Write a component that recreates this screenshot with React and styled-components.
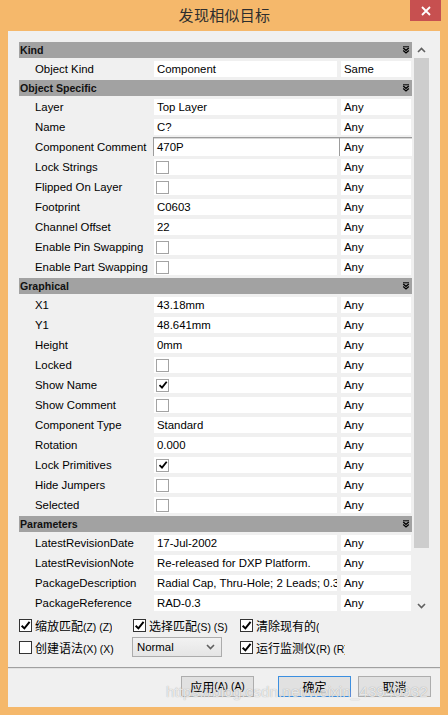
import React from "react";
import styled, { createGlobalStyle, css } from "styled-components";

const Global = createGlobalStyle`
  html, body { margin: 0; padding: 0; }
  body { width: 448px; height: 715px; overflow: hidden; background: #f5b86b; }
  * { box-sizing: border-box; }
`;

const UI = `"Liberation Sans", Arial, sans-serif`;
const CJK = `"Liberation Sans", "Noto Sans CJK SC", sans-serif`;

const Window = styled.div`
  position: relative;
  width: 448px;
  height: 715px;
  background: #f5b86b;
  display: flex;
  flex-direction: column;
  padding: 0 8px 8px 8px;
`;

const TitleBar = styled.div`
  height: 31px;
  display: grid;
  grid-template-columns: 1fr auto 1fr;
  align-items: start;
  margin: 0 -1px 0 0;
`;

const Title = styled.div`
  grid-column: 2;
  font-family: "Noto Sans CJK SC", sans-serif;
  font-size: 15px;
  line-height: 30px;
  color: #2e2e2e;
  letter-spacing: 0.3px;
`;

const CloseButton = styled.div`
  grid-column: 3;
  justify-self: end;
  width: 31px;
  height: 21px;
  background: #c75050;
  display: flex;
  align-items: center;
  justify-content: center;
`;

const Client = styled.div`
  flex: 1;
  background: #f0f0f0;
  display: flex;
  flex-direction: column;
`;

const TopPane = styled.div`
  padding: 11px 10px 0 11px;
  display: flex;
  flex-direction: column;
`;

const GridArea = styled.div`
  display: flex;
  gap: 1px;
  height: 572px;
`;

const Grid = styled.div`
  width: 393px;
  display: flex;
  flex-direction: column;
  gap: 1px;
  overflow: hidden;
`;

const Section = styled.div`
  display: flex;
  flex-direction: column;
`;

const SectionHeader = styled.div`
  height: 16px;
  margin-bottom: 1px;
  background: #a2a2a2;
  display: flex;
  align-items: center;
  justify-content: space-between;
  padding: 0 2px 0 1px;
  font-family: ${UI};
  font-weight: bold;
  font-size: 10.6px;
  color: #111;
`;

const Row = styled.div`
  height: 20px;
  display: grid;
  grid-template-columns: 131px 183px 70px;
  column-gap: 4px;
  align-items: center;
  font-family: ${UI};
  font-size: 11.4px;
  color: #000;
`;

const Label = styled.div`
  padding-left: 16px;
  white-space: nowrap;
  overflow: visible;
`;

const focusCss = css`
  align-self: start;
  height: 19px;
  border-top: 1px solid #9c9c9c;
  box-shadow: inset 0 1px 0 #d8d8d8;
`;

const Cell = styled.div`
  height: 16px;
  background: #fff;
  display: flex;
  align-items: center;
  padding-left: 3px;
  white-space: nowrap;
  overflow: hidden;
  ${(p) => p.$focused && focusCss}
`;

const ValueCell = styled(Cell)`
  ${(p) =>
    p.$focused &&
    css`
      margin-left: -1px;
      margin-right: -2px;
      padding-left: 3px;
      border-left: 1px solid #9c9c9c;
    `}
`;

const AnyCell = styled(Cell)`
  ${(p) =>
    p.$focused &&
    css`
      margin-left: -2px;
      margin-right: -1px;
      padding-left: 4px;
      border-left: 1px solid #9c9c9c;
    `}
`;

const GridCheck = styled.div`
  width: 13px;
  height: 13px;
  margin-left: -1px;
  border: 1px solid #a3a3a3;
  background: #fff;
  display: flex;
  align-items: center;
  justify-content: center;
`;

const ScrollBar = styled.div`
  width: 17px;
  display: flex;
  flex-direction: column;
  align-items: center;
`;

const ScrollButton = styled.div`
  height: ${(p) => p.$h}px;
  width: 17px;
  display: flex;
  align-items: center;
  justify-content: center;
`;

const Thumb = styled.div`
  width: 15px;
  height: 490px;
  background: #cdcdcd;
`;

const Track = styled.div`
  flex: 1;
`;

const Options = styled.div`
  margin-top: 1px;
  display: grid;
  grid-template-columns: 113px 108px 1fr;
  grid-auto-rows: 20px;
  row-gap: 2px;
  align-items: center;
`;

const Option = styled.div`
  display: flex;
  align-items: center;
  gap: 3px;
  margin-left: ${(p) => p.$indent || 0}px;
`;

const OptBox = styled.div`
  width: 13px;
  height: 13px;
  flex: none;
  border: 1px solid #333;
  background: #fff;
  display: flex;
  align-items: center;
  justify-content: center;
`;

const OptLabel = styled.div`
  font-family: ${CJK};
  font-size: 12px;
  color: #000;
  white-space: nowrap;
  overflow: hidden;
  max-width: ${(p) => (p.$clip ? `${p.$clip}px` : "none")};
`;

const Key = styled.span`
  font-family: ${UI};
  font-size: 10.4px;
`;

const Select = styled.div`
  width: 90px;
  height: 20px;
  border: 1px solid #acacac;
  background: linear-gradient(#f2f2f2, #e5e5e5);
  display: flex;
  align-items: center;
  justify-content: space-between;
  padding: 0 6px 0 4px;
  font-family: ${UI};
  font-size: 11.4px;
  color: #000;
`;

const Separator = styled.div`
  margin-top: 10px;
  height: 2px;
  border-top: 1px solid #a0a0a0;
  border-bottom: 1px solid #e2e2e2;
`;

const ButtonBar = styled.div`
  flex: 1;
  display: flex;
  justify-content: flex-end;
  align-items: flex-start;
  padding: 7px 9px 0 0;
`;

const Button = styled.div`
  width: 73px;
  height: 21px;
  margin-left: ${(p) => p.$gap}px;
  background: #e1e1e1;
  border: 1px solid ${(p) => (p.$default ? "#3c8fe0" : "#adadad")};
  display: flex;
  align-items: center;
  justify-content: center;
  font-family: ${CJK};
  font-size: 12px;
  color: #000;
`;

const Watermark = styled.div`
  position: absolute;
  left: 166px;
  top: 683px;
  font-family: ${UI};
  font-size: 15.4px;
  color: rgba(255, 255, 255, 0.75);
  text-shadow: 0 0 1px rgba(0, 0, 0, 0.35);
  white-space: nowrap;
  pointer-events: none;
`;

const Check = ({ size = 10 }) => (
  <svg width={size} height={size} viewBox="0 0 10 10">
    <path d="M1.5 5.2 L4 7.6 L8.7 1.8" fill="none" stroke="#000" strokeWidth="1.8" />
  </svg>
);

const DoubleChevron = () => (
  <svg width="8" height="8" viewBox="0 0 8 8">
    <path d="M1 0.8 H7" stroke="#000" strokeWidth="1" />
    <path d="M1.2 2 L4 4.3 L6.8 2" fill="none" stroke="#000" strokeWidth="1.3" />
    <path d="M1.2 4.6 L4 6.9 L6.8 4.6" fill="none" stroke="#000" strokeWidth="1.3" />
  </svg>
);

const Chevron = ({ up, color = "#606060" }) => (
  <svg width="9" height="6" viewBox="0 0 9 6">
    <path
      d={up ? "M1 5 L4.5 1.5 L8 5" : "M1 1 L4.5 4.5 L8 1"}
      fill="none"
      stroke={color}
      strokeWidth="1.6"
    />
  </svg>
);

const sections = [
  { title: "Kind", rows: [{ label: "Object Kind", value: "Component", any: "Same" }] },
  {
    title: "Object Specific",
    rows: [
      { label: "Layer", value: "Top Layer" },
      { label: "Name", value: "C?" },
      { label: "Component Comment", value: "470P", focused: true },
      { label: "Lock Strings", check: false },
      { label: "Flipped On Layer", check: false },
      { label: "Footprint", value: "C0603" },
      { label: "Channel Offset", value: "22" },
      { label: "Enable Pin Swapping", check: false },
      { label: "Enable Part Swapping", check: false },
    ],
  },
  {
    title: "Graphical",
    rows: [
      { label: "X1", value: "43.18mm" },
      { label: "Y1", value: "48.641mm" },
      { label: "Height", value: "0mm" },
      { label: "Locked", check: false },
      { label: "Show Name", check: true },
      { label: "Show Comment", check: false },
      { label: "Component Type", value: "Standard" },
      { label: "Rotation", value: "0.000" },
      { label: "Lock Primitives", check: true },
      { label: "Hide Jumpers", check: false },
      { label: "Selected", check: false },
    ],
  },
  {
    title: "Parameters",
    rows: [
      { label: "LatestRevisionDate", value: "17-Jul-2002" },
      { label: "LatestRevisionNote", value: "Re-released for DXP Platform." },
      { label: "PackageDescription", value: "Radial Cap, Thru-Hole; 2 Leads; 0.3 Inch Pin Spacing" },
      { label: "PackageReference", value: "RAD-0.3" },
    ],
  },
];

function PropRow({ row }) {
  return (
    <Row>
      <Label>{row.label}</Label>
      <ValueCell $focused={row.focused}>
        {row.check !== undefined ? (
          <GridCheck>{row.check && <Check />}</GridCheck>
        ) : (
          row.value
        )}
      </ValueCell>
      <AnyCell $focused={row.focused}>{row.any || "Any"}</AnyCell>
    </Row>
  );
}

function CheckOption({ checked, text, keyText, clip, indent }) {
  return (
    <Option $indent={indent}>
      <OptBox>{checked && <Check size={11} />}</OptBox>
      <OptLabel $clip={clip}>
        {text}
        <Key>{keyText}</Key>
      </OptLabel>
    </Option>
  );
}

export default function App() {
  return (
    <>
      <Global />
      <Window>
        <TitleBar>
          <Title>发现相似目标</Title>
          <CloseButton>
            <svg width="10" height="10" viewBox="0 0 10 10">
              <path d="M1 1 L9 9 M9 1 L1 9" stroke="#fff" strokeWidth="1.8" />
            </svg>
          </CloseButton>
        </TitleBar>
        <Client>
          <TopPane>
            <GridArea>
              <Grid>
                {sections.map((s) => (
                  <Section key={s.title}>
                    <SectionHeader>
                      <span>{s.title}</span>
                      <DoubleChevron />
                    </SectionHeader>
                    {s.rows.map((r) => (
                      <PropRow key={r.label} row={r} />
                    ))}
                  </Section>
                ))}
              </Grid>
              <ScrollBar>
                <ScrollButton $h={16}>
                  <Chevron up />
                </ScrollButton>
                <Thumb />
                <Track />
                <ScrollButton $h={17}>
                  <Chevron />
                </ScrollButton>
              </ScrollBar>
            </GridArea>
            <Options>
              <CheckOption checked text="缩放匹配" keyText="(Z) (Z)" />
              <CheckOption checked text="选择匹配" keyText="(S) (S)" indent={1} />
              <CheckOption checked text="清除现有的" keyText="(" clip={70} />
              <CheckOption checked={false} text="创建语法" keyText="(X) (X)" />
              <Select>
                <span>Normal</span>
                <Chevron />
              </Select>
              <CheckOption checked text="运行监测仪" keyText="(R) (R)" clip={89} />
            </Options>
          </TopPane>
          <Separator />
          <ButtonBar>
            <Button $gap={0}>
              应用<Key>(A) (A)</Key>
            </Button>
            <Button $gap={24} $default>
              确定
            </Button>
            <Button $gap={7}>取消</Button>
          </ButtonBar>
        </Client>
        <Watermark>https://blog.csdn.net/weixin_43940932</Watermark>
      </Window>
    </>
  );
}
